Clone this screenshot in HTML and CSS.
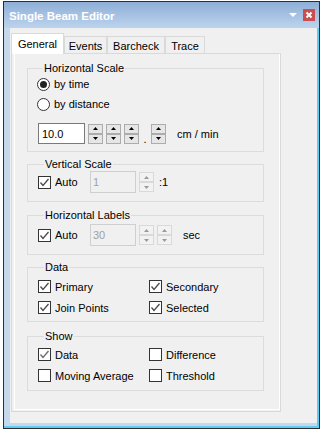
FILE: index.html
```html
<!DOCTYPE html>
<html>
<head>
<meta charset="utf-8">
<link rel="stylesheet" href="styles.css">
</head>
<body>
<div class="window">
  <div class="titlebar">
    <span class="title">Single Beam Editor</span>
    <span class="tb-menu"><svg width="8" height="4" viewBox="0 0 8 4"><polygon points="0,0 8,0 4,4" fill="#fff"/></svg></span>
    <span class="tb-close"><svg width="12" height="12" viewBox="0 0 12 12"><path d="M3.5 3.5 L8.5 8.5 M8.5 3.5 L3.5 8.5" stroke="#fff" stroke-width="2"/></svg></span>
  </div>
  <div class="client">
    <div class="tabs">
      <div class="tab active">General</div>
      <div class="tab t-events">Events</div>
      <div class="tab t-barcheck">Barcheck</div>
      <div class="tab t-trace">Trace</div>
    </div>
    <div class="panel">
      <div class="page">

        <div class="group g-hs">
          <span class="group-title">Horizontal Scale</span>
          <div class="radio-row first"><span class="radio checked"></span><span>by time</span></div>
          <div class="radio-row"><span class="radio"></span><span>by distance</span></div>
          <div class="input-row">
            <span class="textbox">10.0</span>
            <span class="spin sp1"><span class="sb"><svg width="5" height="3" viewBox="0 0 5 3"><polygon points="0,3 5,3 2.5,0" /></svg></span><span class="sb"><svg width="5" height="3" viewBox="0 0 5 3"><polygon points="0,0 5,0 2.5,3" /></svg></span></span>
            <span class="spin"><span class="sb"><svg width="5" height="3" viewBox="0 0 5 3"><polygon points="0,3 5,3 2.5,0" /></svg></span><span class="sb"><svg width="5" height="3" viewBox="0 0 5 3"><polygon points="0,0 5,0 2.5,3" /></svg></span></span>
            <span class="spin"><span class="sb"><svg width="5" height="3" viewBox="0 0 5 3"><polygon points="0,3 5,3 2.5,0" /></svg></span><span class="sb"><svg width="5" height="3" viewBox="0 0 5 3"><polygon points="0,0 5,0 2.5,3" /></svg></span></span>
            <span class="dot">.</span>
            <span class="spin sp-last"><span class="sb"><svg width="5" height="3" viewBox="0 0 5 3"><polygon points="0,3 5,3 2.5,0" /></svg></span><span class="sb"><svg width="5" height="3" viewBox="0 0 5 3"><polygon points="0,0 5,0 2.5,3" /></svg></span></span>
            <span class="unit">cm / min</span>
          </div>
        </div>

        <div class="group g-vs">
          <span class="group-title">Vertical Scale</span>
          <div class="auto-row">
            <span class="auto-label"><span class="check on"><svg width="11" height="11" viewBox="0 0 11 11"><path d="M1.5 5.5 L4 8.5 L9.5 2" fill="none" stroke="#4a4a4a" stroke-width="1.3"/></svg></span><span>Auto</span></span>
            <span class="textbox disabled">1</span>
            <span class="spin disabled sp1"><span class="sb"><svg width="5" height="3" viewBox="0 0 5 3"><polygon points="0,3 5,3 2.5,0" /></svg></span><span class="sb"><svg width="5" height="3" viewBox="0 0 5 3"><polygon points="0,0 5,0 2.5,3" /></svg></span></span>
            <span class="ratio">:1</span>
          </div>
        </div>

        <div class="group g-hl">
          <span class="group-title">Horizontal Labels</span>
          <div class="auto-row">
            <span class="auto-label"><span class="check on"><svg width="11" height="11" viewBox="0 0 11 11"><path d="M1.5 5.5 L4 8.5 L9.5 2" fill="none" stroke="#4a4a4a" stroke-width="1.3"/></svg></span><span>Auto</span></span>
            <span class="textbox disabled">30</span>
            <span class="spin disabled sp1"><span class="sb"><svg width="5" height="3" viewBox="0 0 5 3"><polygon points="0,3 5,3 2.5,0" /></svg></span><span class="sb"><svg width="5" height="3" viewBox="0 0 5 3"><polygon points="0,0 5,0 2.5,3" /></svg></span></span>
            <span class="spin disabled sp2"><span class="sb"><svg width="5" height="3" viewBox="0 0 5 3"><polygon points="0,3 5,3 2.5,0" /></svg></span><span class="sb"><svg width="5" height="3" viewBox="0 0 5 3"><polygon points="0,0 5,0 2.5,3" /></svg></span></span>
            <span class="sec">sec</span>
          </div>
        </div>

        <div class="group g-data">
          <span class="group-title">Data</span>
          <div class="check-grid">
            <span class="citem"><span class="check on"><svg width="11" height="11" viewBox="0 0 11 11"><path d="M1.5 5.5 L4 8.5 L9.5 2" fill="none" stroke="#4a4a4a" stroke-width="1.3"/></svg></span><span>Primary</span></span>
            <span class="citem"><span class="check on"><svg width="11" height="11" viewBox="0 0 11 11"><path d="M1.5 5.5 L4 8.5 L9.5 2" fill="none" stroke="#4a4a4a" stroke-width="1.3"/></svg></span><span>Secondary</span></span>
            <span class="citem"><span class="check on"><svg width="11" height="11" viewBox="0 0 11 11"><path d="M1.5 5.5 L4 8.5 L9.5 2" fill="none" stroke="#4a4a4a" stroke-width="1.3"/></svg></span><span>Join Points</span></span>
            <span class="citem"><span class="check on"><svg width="11" height="11" viewBox="0 0 11 11"><path d="M1.5 5.5 L4 8.5 L9.5 2" fill="none" stroke="#4a4a4a" stroke-width="1.3"/></svg></span><span>Selected</span></span>
          </div>
        </div>

        <div class="group g-show">
          <span class="group-title">Show</span>
          <div class="check-grid show-grid">
            <span class="citem"><span class="check on"><svg width="11" height="11" viewBox="0 0 11 11"><path d="M1.5 5.5 L4 8.5 L9.5 2" fill="none" stroke="#6a6a6a" stroke-width="1.3"/></svg></span><span>Data</span></span>
            <span class="citem"><span class="check"></span><span>Difference</span></span>
            <span class="citem"><span class="check"></span><span>Moving Average</span></span>
            <span class="citem"><span class="check"></span><span>Threshold</span></span>
          </div>
        </div>

      </div>
    </div>
  </div>
</div>
</body>
</html>
```

FILE: styles.css
```css
* { box-sizing: border-box; }

body {
  margin: 0;
  background: #fff;
  font-family: "Liberation Sans", Arial, sans-serif;
  font-size: 11px;
  color: #000;
}

.window {
  margin: 1px 0 0 3px;
  width: 317px;
  height: 428px;
  border: 1px solid #2e2e2e;
  background: #c4d8ee;
  box-shadow: inset -2px -2px 0 #5fcdf3;
  display: flex;
  flex-direction: column;
}

.titlebar {
  height: 26px;
  flex: none;
  display: flex;
  align-items: center;
  padding: 0 4px 0 5px;
  background: linear-gradient(#8fafd7, #bcd3ed);
}

.title {
  flex: 1;
  color: #fff;
  font-weight: bold;
  font-size: 11.5px;
  margin-top: 1px;
}

.tb-menu {
  display: flex;
  margin-right: 6px;
}

.tb-close {
  width: 12px;
  height: 12px;
  background: #c94f4f;
  display: flex;
  margin-top: -1px;
}

.client {
  flex: 1;
  margin: 0 2px 5px 6px;
  background: #f0f0f0;
  padding: 5px 0 0 1px;
}

.tabs {
  display: flex;
  align-items: flex-end;
  height: 20px;
}

.tab {
  height: 17px;
  border: 1px solid #d9d9d9;
  border-bottom: none;
  background: #f0f0f0;
  display: flex;
  align-items: center;
  justify-content: center;
  padding-top: 1px;
}

.tab.active {
  position: relative;
  z-index: 1;
  height: 21px;
  margin-bottom: -1px;
  width: 53px;
  background: #fff;
  padding-top: 0;
  padding-bottom: 1px;
}

.t-events { width: 43px; }
.t-barcheck { width: 58px; }
.t-trace { width: 40px; }

.panel {
  width: 270px;
  height: 359px;
  border: 1px solid #d9d9d9;
  padding: 0 0 1px 2px;
}

.page {
  height: 100%;
  border: 1px solid #fff;
  border-top: none;
  padding: 14px 0 0 12px;
  display: flex;
  flex-direction: column;
}

.group {
  width: 237px;
  border: 1px solid #dcdcdc;
  display: flex;
  flex-direction: column;
}

.group-title {
  align-self: flex-start;
  line-height: 14px;
  margin: -8px 0 0 6px;
  padding: 0 1px;
  background: #f0f0f0;
}

.g-hs { padding: 0 0 7px 9px; }
.g-vs { margin-top: 12px; padding: 0 0 8px 10px; }
.g-hl { margin-top: 13px; padding: 0 0 8px 10px; }
.g-data { margin-top: 12px; padding: 0 0 3px 10px; }
.g-show { margin-top: 14px; padding: 0 0 4px 10px; }

.radio-row {
  height: 20px;
  display: flex;
  align-items: center;
  gap: 4px;
}

.radio-row.first { margin-top: -1px; }

.radio {
  width: 13px;
  height: 13px;
  border: 1px solid #333;
  border-radius: 50%;
  background: #fff;
  display: flex;
  align-items: center;
  justify-content: center;
}

.radio.checked::after {
  content: "";
  width: 7px;
  height: 7px;
  border-radius: 50%;
  background: #222;
}

.input-row {
  margin-top: 9px;
  height: 21px;
  display: flex;
  align-items: center;
}

.textbox {
  width: 47px;
  height: 21px;
  border: 1px solid #7a7a7a;
  background: #fff;
  display: flex;
  align-items: center;
  padding-left: 3px;
  margin-left: 1px;
}

.textbox.disabled {
  width: 46px;
  height: 22px;
  margin-left: 0;
  border-color: #cfcfcf;
  background: #f0f0f0;
  color: #a0a0a0;
  padding-left: 2px;
}

.spin {
  display: flex;
  flex-direction: column;
  margin-left: 3px;
}

.sb {
  width: 15px;
  height: 10px;
  border: 1px solid #acacac;
  background: #e6e6e6;
  display: flex;
  align-items: center;
  justify-content: center;
}

.sb svg { fill: #000; }

.spin.disabled .sb {
  border-color: #d9d9d9;
  background: #f2f2f2;
}

.spin.disabled .sb svg { fill: #9a9a9a; }

.dot {
  width: 12px;
  align-self: flex-end;
  text-align: center;
  line-height: 14px;
  margin-bottom: -2px;
}

.spin.sp-last { margin-left: 0; }

.unit { margin-left: 11px; }

.auto-row {
  height: 22px;
  display: flex;
  align-items: center;
}

.g-hl .auto-row { margin-top: 2px; }

.auto-label {
  width: 52px;
  display: flex;
  align-items: center;
  gap: 4px;
}

.check {
  width: 13px;
  height: 13px;
  border: 1px solid #333;
  background: #fff;
  display: flex;
  align-items: center;
  justify-content: center;
  flex: none;
}

.ratio { margin-left: 5px; }
.sec { margin-left: 11px; }

.check-grid {
  display: grid;
  grid-template-columns: 111px auto;
  grid-auto-rows: 21px;
  margin-top: 2px;
}

.show-grid { margin-top: 1px; }

.citem {
  display: flex;
  align-items: center;
  gap: 4px;
}
```
